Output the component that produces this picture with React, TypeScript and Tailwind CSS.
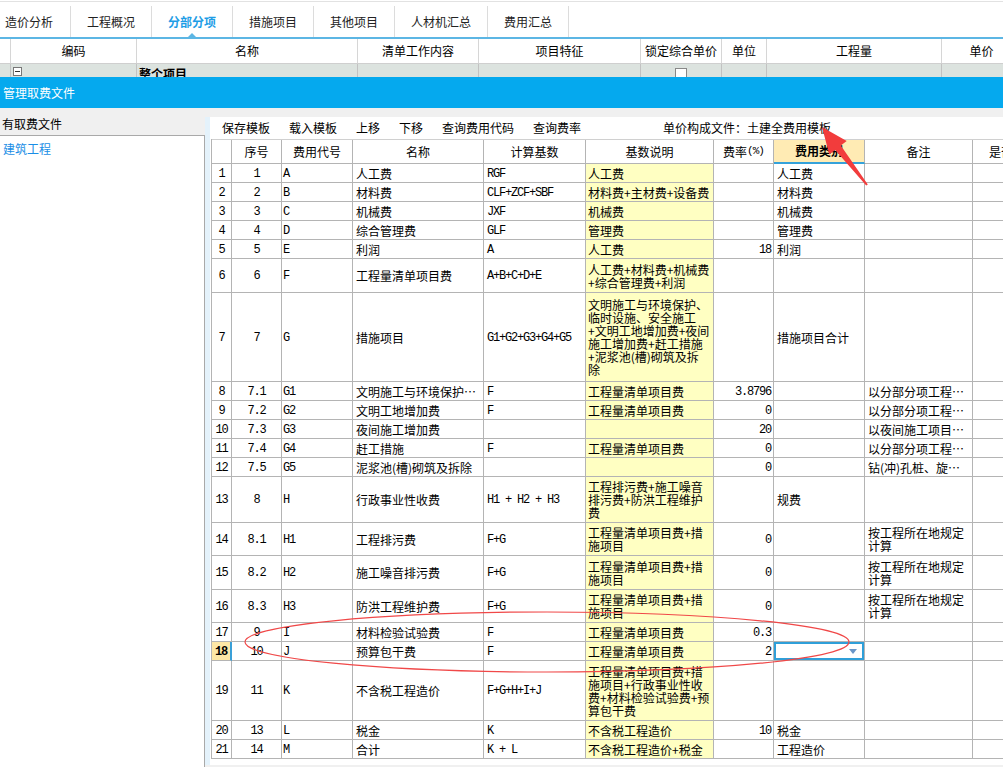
import React from 'react';

const tabs = ['造价分析', '工程概况', '分部分项', '措施项目', '其他项目', '人材机汇总', '费用汇总'];

const topCols = [
  { label: '', w: 'w-[11px]' },
  { label: '编码', w: 'w-[126px]' },
  { label: '名称', w: 'w-[221px]' },
  { label: '清单工作内容', w: 'w-[121px]' },
  { label: '项目特征', w: 'w-[162px]' },
  { label: '锁定综合单价', w: 'w-[81px]' },
  { label: '单位', w: 'w-[45px]' },
  { label: '工程量', w: 'w-[175px]' },
  { label: '单价', w: 'w-[80px]' },
];

const toolbar = ['保存模板', '载入模板', '上移', '下移', '查询费用代码', '查询费率'];

interface Row {
  no: string;
  seq: string;
  code: string;
  name: string;
  base: string;
  desc: string[];
  rate: string;
  kind: string;
  note: string[];
  h: string;
  sel?: boolean;
}

const rows: Row[] = [
  { no: '1', seq: '1', code: 'A', name: '人工费', base: 'RGF', desc: ['人工费'], rate: '', kind: '人工费', note: [], h: 'h-[19px]' },
  { no: '2', seq: '2', code: 'B', name: '材料费', base: 'CLF+ZCF+SBF', desc: ['材料费+主材费+设备费'], rate: '', kind: '材料费', note: [], h: 'h-[19px]' },
  { no: '3', seq: '3', code: 'C', name: '机械费', base: 'JXF', desc: ['机械费'], rate: '', kind: '机械费', note: [], h: 'h-[19px]' },
  { no: '4', seq: '4', code: 'D', name: '综合管理费', base: 'GLF', desc: ['管理费'], rate: '', kind: '管理费', note: [], h: 'h-[19px]' },
  { no: '5', seq: '5', code: 'E', name: '利润', base: 'A', desc: ['人工费'], rate: '18', kind: '利润', note: [], h: 'h-[19px]' },
  { no: '6', seq: '6', code: 'F', name: '工程量清单项目费', base: 'A+B+C+D+E', desc: ['人工费+材料费+机械费', '+综合管理费+利润'], rate: '', kind: '', note: [], h: 'h-[34px]' },
  {
    no: '7', seq: '7', code: 'G', name: '措施项目', base: 'G1+G2+G3+G4+G5',
    desc: ['文明施工与环境保护、', '临时设施、安全施工', '+文明工地增加费+夜间', '施工增加费+赶工措施', '+泥浆池(槽)砌筑及拆', '除'],
    rate: '', kind: '措施项目合计', note: [], h: 'h-[89px]',
  },
  { no: '8', seq: '7.1', code: 'G1', name: '文明施工与环境保护…', base: 'F', desc: ['工程量清单项目费'], rate: '3.8796', kind: '', note: ['以分部分项工程…'], h: 'h-[19px]' },
  { no: '9', seq: '7.2', code: 'G2', name: '文明工地增加费', base: 'F', desc: ['工程量清单项目费'], rate: '0', kind: '', note: ['以分部分项工程…'], h: 'h-[19px]' },
  { no: '10', seq: '7.3', code: 'G3', name: '夜间施工增加费', base: '', desc: [], rate: '20', kind: '', note: ['以夜间施工项目…'], h: 'h-[19px]' },
  { no: '11', seq: '7.4', code: 'G4', name: '赶工措施', base: 'F', desc: ['工程量清单项目费'], rate: '0', kind: '', note: ['以分部分项工程…'], h: 'h-[19px]' },
  { no: '12', seq: '7.5', code: 'G5', name: '泥浆池(槽)砌筑及拆除', base: '', desc: [], rate: '0', kind: '', note: ['钻(冲)孔桩、旋…'], h: 'h-[19px]' },
  { no: '13', seq: '8', code: 'H', name: '行政事业性收费', base: 'H1 + H2 + H3', desc: ['工程排污费+施工噪音', '排污费+防洪工程维护', '费'], rate: '', kind: '规费', note: [], h: 'h-[46px]' },
  { no: '14', seq: '8.1', code: 'H1', name: '工程排污费', base: 'F+G', desc: ['工程量清单项目费+措', '施项目'], rate: '0', kind: '', note: ['按工程所在地规定', '计算'], h: 'h-[33px]' },
  { no: '15', seq: '8.2', code: 'H2', name: '施工噪音排污费', base: 'F+G', desc: ['工程量清单项目费+措', '施项目'], rate: '0', kind: '', note: ['按工程所在地规定', '计算'], h: 'h-[34px]' },
  { no: '16', seq: '8.3', code: 'H3', name: '防洪工程维护费', base: 'F+G', desc: ['工程量清单项目费+措', '施项目'], rate: '0', kind: '', note: ['按工程所在地规定', '计算'], h: 'h-[33px]' },
  { no: '17', seq: '9', code: 'I', name: '材料检验试验费', base: 'F', desc: ['工程量清单项目费'], rate: '0.3', kind: '', note: [], h: 'h-[19px]' },
  { no: '18', seq: '10', code: 'J', name: '预算包干费', base: 'F', desc: ['工程量清单项目费'], rate: '2', kind: '', note: [], h: 'h-[19px]', sel: true },
  {
    no: '19', seq: '11', code: 'K', name: '不含税工程造价', base: 'F+G+H+I+J',
    desc: ['工程量清单项目费+措', '施项目+行政事业性收', '费+材料检验试验费+预', '算包干费'],
    rate: '', kind: '', note: [], h: 'h-[60px]',
  },
  { no: '20', seq: '13', code: 'L', name: '税金', base: 'K', desc: ['不含税工程造价'], rate: '10', kind: '税金', note: [], h: 'h-[19px]' },
  { no: '21', seq: '14', code: 'M', name: '合计', base: 'K + L', desc: ['不含税工程造价+税金'], rate: '', kind: '工程造价', note: [], h: 'h-[19px]' },
];

const gridCols = 'grid grid-cols-[20px_50px_71px_131px_102px_128px_60px_91px_108px_60px]';
const cell = 'border-r border-b border-[#b4b4b4] flex items-center overflow-hidden leading-[13px]';
// SimSun-like half-width latin: nudged down to share the CJK baseline
const mono = "font-['Liberation_Mono',monospace] text-[12px] tracking-[-1.2px] whitespace-pre pt-[2px]";

function Lines({ lines }: { lines: string[] }) {
  return (
    <div>
      {lines.map((l, i) => (
        <div key={i} className="whitespace-nowrap h-[13px]">
          {l}
        </div>
      ))}
    </div>
  );
}

export default function App() {
  return (
    <div className="relative h-[767px] w-full overflow-hidden bg-white font-['Noto_Sans_CJK_SC',sans-serif] text-[12px] text-black flex flex-col">
      {/* Tab bar */}
      <div className="h-[37px] pt-px shrink-0">
        <div className="h-full border-t border-[#e2e2e2] flex items-end">
          {tabs.map((t, i) => (
            <div
              key={t}
              className={`relative h-[31px] flex items-center border-r border-[#dcdcdc] ${
                i === 0 ? 'pl-[5px] pr-[17px]' : 'px-[16px]'
              } ${i === 2 ? 'text-[#1e9de6] font-bold' : 'text-[#222]'}`}
            >
              {t}
              {i === 2 && (
                <div className="absolute bottom-0 left-1/2 -translate-x-1/2 w-0 h-0 border-x-[4px] border-x-transparent border-b-[4px] border-b-[#5cb6e4]" />
              )}
            </div>
          ))}
        </div>
      </div>
      <div className="h-[2px] bg-[#5cb6e4] shrink-0" />

      {/* Main grid header (behind dialog) */}
      <div className="h-[25px] flex border-b border-[#cfcfcf] shrink-0">
        {topCols.map((c, i) => (
          <div key={i} className={`${c.w} shrink-0 border-r border-[#d6d6d6] flex items-center justify-center`}>
            {c.label}
          </div>
        ))}
      </div>
      <div className="h-[13px] overflow-hidden shrink-0">
        <div className="h-[20px] flex bg-[#dce3df]">
          {topCols.map((c, i) => (
            <div key={i} className={`${c.w} shrink-0 border-r border-[#c2c2c2] flex pt-[3px]`}>
              {i === 1 && (
                <div className="ml-[2px] w-[9px] h-[9px] border border-[#777] bg-white flex items-center justify-center">
                  <div className="w-[5px] h-px bg-[#333]" />
                </div>
              )}
              {i === 2 && <span className="pl-[2px] font-bold leading-[14px]">整个项目</span>}
              {i === 5 && <div className="mx-auto mt-px w-[12px] h-[12px] border border-[#888] bg-white" />}
            </div>
          ))}
        </div>
      </div>

      {/* Dialog */}
      <div className="flex-1 min-h-0 flex flex-col bg-[#f0f0f0]">
        <div className="h-[31px] shrink-0 bg-[#05a9ee] text-white flex items-center pl-[3px]">管理取费文件</div>
        <div className="flex-1 min-h-0 flex">
          {/* Left list */}
          <div className="w-[205px] shrink-0 flex flex-col">
            <div className="h-[28px] border-b border-[#a9a9a9] flex items-center pl-[2px] pt-[4px]">有取费文件</div>
            <div className="flex-1 bg-white border-r border-[#a9a9a9] pl-[3px] pt-[5px] text-[#1a8ee6] leading-[16px]">建筑工程</div>
          </div>

          {/* Right panel */}
          <div className="flex-1 min-w-0 flex flex-col pt-[9px]">
            <div className="flex-1 min-h-0 flex">
              <div className="w-[5px] shrink-0 bg-[#e4f2fb]" />
              <div className="flex-1 min-w-0 bg-white flex flex-col overflow-hidden">
                <div className="h-[22px] shrink-0 flex items-center pl-[12px] gap-[19px]">
                  {toolbar.map((b) => (
                    <span key={b}>{b}</span>
                  ))}
                  <span className="ml-[63px]">单价构成文件：土建全费用模板</span>
                </div>

                <div className="ml-px border-l border-[#b4b4b4] overflow-hidden">
                  {/* header */}
                  <div className={`${gridCols} h-[25px] border-t border-[#d0d0d0]`}>
                    <div className={cell} />
                    <div className={`${cell} justify-center`}>序号</div>
                    <div className={`${cell} justify-center`}>费用代号</div>
                    <div className={`${cell} justify-center`}>名称</div>
                    <div className={`${cell} justify-center`}>计算基数</div>
                    <div className={`${cell} justify-center`}>基数说明</div>
                    <div className={`${cell} justify-center`}>
                      费率<span className="font-['Liberation_Mono',monospace] text-[11px] tracking-[-1px]">(%)</span>
                    </div>
                    <div className="border-r border-[#b4b4b4] border-b-2 border-b-[#35a2da] bg-[#ffebb4] font-bold flex items-center justify-center">
                      费用类别
                    </div>
                    <div className={`${cell} justify-center`}>备注</div>
                    <div className={`${cell} justify-start pl-[16px] whitespace-nowrap`}>是否计取</div>
                  </div>

                  {rows.map((r) => (
                    <div key={r.no} className={`${gridCols} ${r.h}`}>
                      <div
                        className={`${cell} justify-center ${mono} ${
                          r.sel ? 'bg-[#fde7a6] font-bold border-r-2 border-r-[#3aa0d8]' : ''
                        }`}
                      >
                        {r.no}
                      </div>
                      <div className={`${cell} justify-center ${mono}`}>{r.seq}</div>
                      <div className={`${cell} pl-[1px] ${mono}`}>{r.code}</div>
                      <div className={`${cell} pl-[3px] whitespace-nowrap`}>{r.name}</div>
                      <div className={`${cell} pl-[3px] ${mono}`}>{r.base}</div>
                      <div className={`${cell} pl-[2px] bg-[#ffffc2]`}>
                        <Lines lines={r.desc} />
                      </div>
                      <div className={`${cell} justify-end pr-[2px] ${mono}`}>{r.rate}</div>
                      <div className={`${cell} relative pl-[3px]`}>
                        {r.kind}
                        {r.sel && (
                          <div className="absolute inset-0 border-2 border-[#2f9fd9] flex items-center justify-end pr-[5px]">
                            <div className="w-0 h-0 border-x-[4px] border-x-transparent border-t-[5px] border-t-[#6a96c8]" />
                          </div>
                        )}
                      </div>
                      <div className={`${cell} pl-[3px]`}>
                        <Lines lines={r.note} />
                      </div>
                      <div className={cell} />
                    </div>
                  ))}
                </div>
              </div>
            </div>
            <div className="h-[2px] shrink-0" />
          </div>
        </div>
      </div>

      {/* Annotation marks */}
      <svg className="absolute inset-0 pointer-events-none" width="1003" height="767" viewBox="0 0 1003 767">
        <ellipse cx="547" cy="642" rx="302" ry="30" fill="none" stroke="#f04848" strokeWidth="1.2" />
        <polygon
          points="822,127 846.7,141 840.8,145.5 867.8,184.4 866.2,185.6 835.2,149.9 829.3,154.5"
          fill="#f23c3c"
        />
      </svg>
    </div>
  );
}
